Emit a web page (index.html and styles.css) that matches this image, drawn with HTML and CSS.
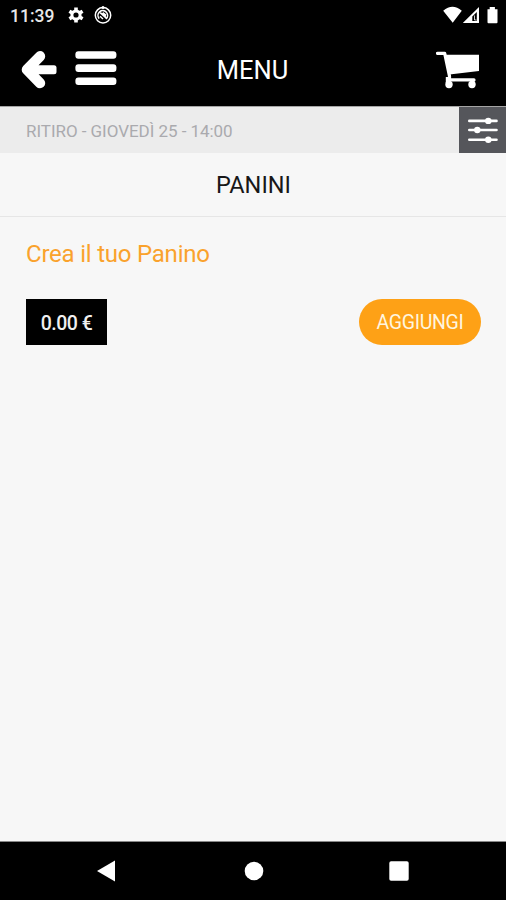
FILE: index.html
```
<!DOCTYPE html>
<html lang="it">
<head>
<meta charset="utf-8">
<title>Menu</title>
<link rel="stylesheet" href="styles.css">
</head>
<body>
<div class="app">
  <div class="status">
    <span class="clock">11:39</span>
    <svg class="gear" width="16" height="16" viewBox="0 0 16 16"><g fill="none" stroke="#fff"><circle cx="8" cy="8" r="4.1" stroke-width="3"/><path d="M8 .4v2.800M8 12.800v2.800M1.400 4.200l2.500 1.400M12.100 10.400l2.500 1.400M14.600 4.200l-2.500 1.400M3.900 10.400l-2.500 1.400" stroke-width="3.600"/></g></svg>
    <svg class="ring" width="18" height="18" viewBox="0 0 18 18"><g fill="none" stroke="#fff"><circle cx="9" cy="9.300" r="7.700" stroke-width="1.500"/><path d="M5.200 12.600A4.800 4.800 0 1 1 12 13" stroke-width="1.600"/><path d="M6.200 6.600l6.200 5.400M8.600 6.800l3.600 2.600" stroke-width="1.800"/><path d="M6 10.300l3 2.800" stroke-width="1.300"/></g><circle cx="9" cy="1.500" r="1.500" fill="#fff"/></svg>
    <svg class="signals" width="58" height="20" viewBox="443 5 58 20"><path fill="#fff" d="M443.200 10.800Q452.500 2.600 461.800 10.800L452.700 22.800zM479 7v16h-16.200z"/><path d="M472.300 21v-4.500L476.800 12v9z" fill="#000"/><path d="M474.500 15.500v4.500h2" fill="none" stroke="#fff" stroke-width=".8"/><path fill="#fff" d="M487.500 9.200h2.200V7h5.200v2.200h2.600v13a1 1 0 0 1-1 1h-8a1 1 0 0 1-1-1z"/></svg>
  </div>
  <header class="header">
    <svg class="left-icons" width="98" height="42" viewBox="20 48 98 42"><path d="M40 56.300L26.900 69.700L40 83.100" fill="none" stroke="#fff" stroke-width="10.400" stroke-linecap="round" stroke-linejoin="round"/><path d="M30 69.700L38.500 62.500V76.900z" fill="#fff"/><rect x="28" y="65.200" width="28.500" height="9" rx="2.500" fill="#fff"/><g fill="#fff"><rect x="75.400" y="51.200" width="41" height="7.600" rx="3"/><rect x="75.400" y="64.300" width="41" height="7.600" rx="3"/><rect x="75.400" y="77.400" width="41" height="7.600" rx="3"/></g></svg>
    <h1>MENU</h1>
    <svg class="cart" width="44" height="40" viewBox="436 50 44 40"><path d="M437.500 53.300h7.200l4.800 22.900v3.700h24.500" fill="none" stroke="#fff" stroke-width="3.200" stroke-linecap="round" stroke-linejoin="round"/><path d="M445 54.800h34v16.200l-29.500 3.400z" fill="#fff"/><circle cx="449" cy="84.500" r="3.700" fill="#fff"/><circle cx="472" cy="84.500" r="3.700" fill="#fff"/><path d="M447.300 77v6M473 80v4" stroke="#fff" stroke-width="3"/></svg>
  </header>
  <div class="pickup">
    <span>RITIRO - GIOVEDÌ 25 - 14:00</span>
    <button class="filter" aria-label="Filtri"><svg width="30" height="28" viewBox="468 116 30 28"><path d="M469.300 120.900h27.200M469.300 130h27.200M469.300 139.700h27.200" stroke="#fff" stroke-width="2.600" stroke-linecap="round"/><g fill="#fff"><circle cx="488.300" cy="120.900" r="3.200"/><circle cx="477.300" cy="130" r="3.200"/><circle cx="488.300" cy="139.700" r="3.200"/></g></svg></button>
  </div>
  <h2>PANINI</h2>
  <main>
    <h3>Crea il tuo Panino</h3>
    <div class="row">
      <span class="price">0.00 €</span>
      <button class="add">AGGIUNGI</button>
    </div>
  </main>
  <nav>
    <svg width="18" height="22" viewBox="0 0 18 22"><path d="M0 11L18 .500v21z" fill="#fff"/></svg>
    <svg class="home" width="20" height="20" viewBox="0 0 20 20"><circle cx="10" cy="10" r="9.300" fill="#fff"/></svg>
    <svg width="20" height="20" viewBox="0 0 20 20"><rect x=".300" y=".300" width="19.400" height="19.400" rx="1.800" fill="#fff"/></svg>
  </nav>
</div>
</body>
</html>
```

FILE: styles.css
```
* { box-sizing: border-box; }
body { margin: 0; font-family: Roboto, sans-serif; background: #f7f7f7; }
h1, h2, h3 { margin: 0; font-weight: 400; }
svg { display: block; flex: none; }
button { border: 0; padding: 0; font-family: inherit; }
.app { height: 900px; display: flex; flex-direction: column; overflow: hidden; }
.status { height: 32px; flex: none; background: #000; display: flex; align-items: center; padding: 0 5px 2px 10px; color: #fff; }
.clock { width: 58px; font-size: 17.5px; font-weight: 500; color: #e8e8e8; white-space: nowrap; padding-top: 2px; }
.ring { margin-left: 10px; }
.signals { margin-left: auto; }
.header { height: 74px; flex: none; background: #000; display: grid; grid-template-columns: 98px 1fr 98px; align-items: center; padding: 0 26px 0 20px; color: #fff; }
.header h1 { font-size: 25.5px; line-height: 30px; text-align: center; padding: 2px 0 0 5px; }
.cart { justify-self: end; margin-top: 2px; }
.pickup { height: 47px; flex: none; background: #ececec; border-top: 1px solid #a5a5a5; display: flex; justify-content: space-between; align-items: center; padding-left: 26px; color: #aaaaae; font-size: 17px; letter-spacing: -.04px; }
.pickup span { padding-top: 1px; }
.filter { width: 47px; height: 46px; background: #55565b; display: flex; align-items: center; justify-content: center; }
h2 { height: 64px; flex: none; border-bottom: 1px solid #e6e6e6; text-align: center; font-size: 23.500px; line-height: 64px; color: #181818; padding-left: 1px; }
main { flex: 1; padding: 23px 25px 0 26px; }
h3 { font-size: 24px; line-height: 29px; letter-spacing: -.22px; color: #faa22c; }
.row { display: flex; justify-content: space-between; margin-top: 30px; }
.price { width: 81px; height: 46px; background: #000; color: #f0f0f0; font-size: 19.500px; line-height: 50px; text-align: center; font-weight: 500; letter-spacing: -.5px; }
.add { width: 122px; height: 46px; border-radius: 23px; background: #fea116; color: #fff5df; font-size: 19.500px; letter-spacing: -.35px; padding-top: 2px; line-height: 44px; }
nav { height: 59px; flex: none; border-top: 1px solid #888; background: #000; display: flex; align-items: center; justify-content: space-between; padding: 0 97px; }
.home { margin-left: 3px; }
```
